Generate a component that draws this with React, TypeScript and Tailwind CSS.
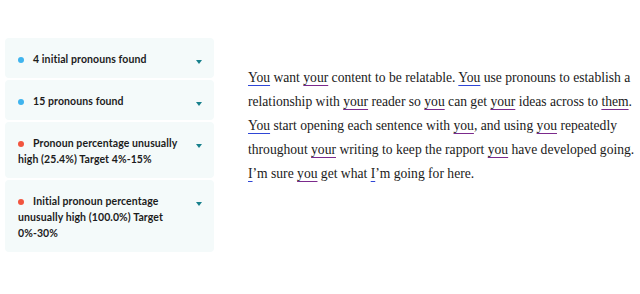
const cards = [
  { color: "bg-[#3fb4ee]", text: "4 initial pronouns found" },
  { color: "bg-[#3fb4ee]", text: "15 pronouns found" },
  { color: "bg-[#f2553f]", text: "Pronoun percentage unusually high (25.4%) Target 4%-15%" },
  { color: "bg-[#f2553f]", text: "Initial pronoun percentage unusually high (100.0%) Target 0%-30%" },
];

function Caret() {
  return (
    <svg width="6" height="4" viewBox="0 0 6 4" className="mt-[9px] shrink-0">
      <path d="M0 0h6L3 4z" fill="#17808c" />
    </svg>
  );
}

function I({ t }: { t: string }) {
  return <span className="underline decoration-[#2f46d6] underline-offset-[3px]">{t}</span>;
}

function P({ t }: { t: string }) {
  return <span className="underline decoration-[#7b2a8c] underline-offset-[3px]">{t}</span>;
}

export default function App() {
  return (
    <div className="w-[640px] h-[294px] bg-white flex items-start">
      <div className="ml-[5px] mt-[38px] w-[209px] flex flex-col gap-[2px] font-['Lato',sans-serif]">
        {cards.map((c) => (
          <div key={c.text} className="bg-[#f4fafa] rounded-[4px] pl-[13px] pr-[12px] pt-[13px] pb-[11px] flex items-start justify-between">
            <p className="text-[10.5px] leading-[16px] font-bold tracking-[0.1px] text-[#1c1c1c] w-[168px]">
              <span className={`inline-block w-[6px] h-[6px] rounded-full ${c.color} mr-[9px] mb-[1px] align-middle`}></span>
              {c.text}
            </p>
            <Caret />
          </div>
        ))}
      </div>
      <div className="ml-[34px] mt-[66px] w-[388px] font-['Liberation_Serif',serif] text-[13.6px] leading-[24px] text-[#1a1a1a]">
        <I t="You" /> want <P t="your" /> content to be relatable. <I t="You" /> use pronouns to establish a relationship with{" "}
        <P t="your" /> reader so <P t="you" /> can get <P t="your" /> ideas across to <P t="them" />. <I t="You" /> start
        opening each sentence with <P t="you" />, and using <P t="you" /> repeatedly throughout <P t="your" /> writing to keep
        the rapport <P t="you" /> have developed going. <I t="I" />’m sure <P t="you" /> get what <I t="I" />’m going for here.
      </div>
    </div>
  );
}
